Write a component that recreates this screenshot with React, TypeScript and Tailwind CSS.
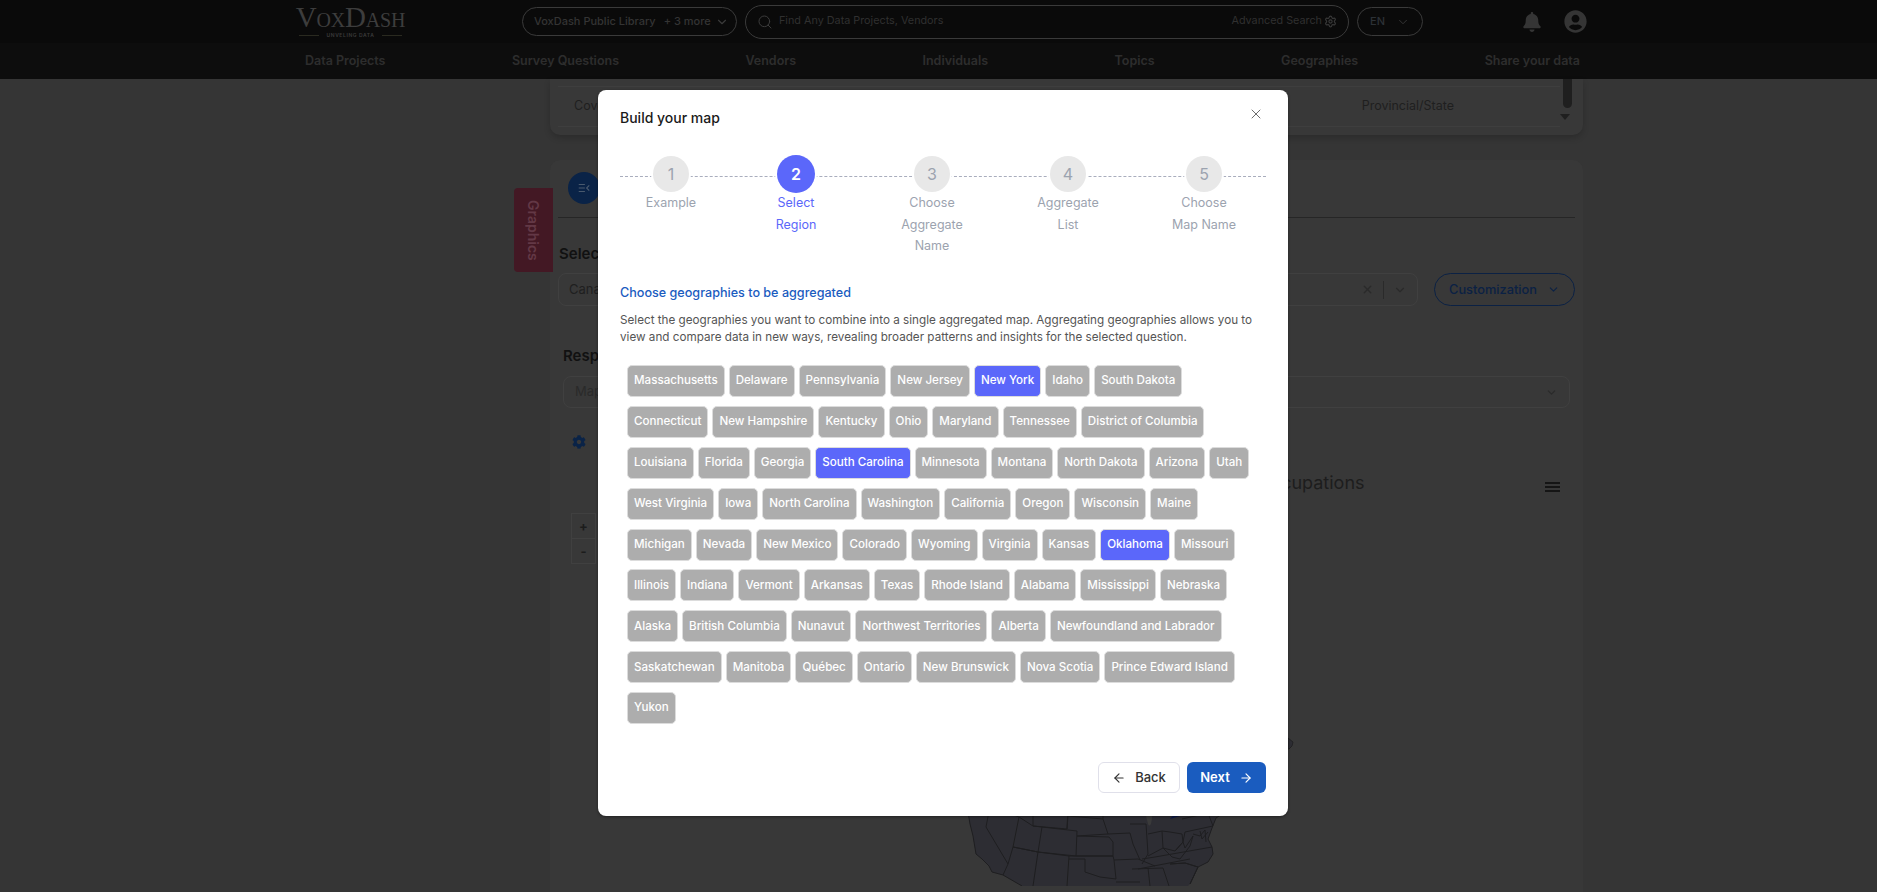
import React from "react";
import { ArrowLeft, ArrowRight, ChevronDown, Search, Settings, X } from "lucide-react";
import { FaBell, FaCog, FaUserCircle } from "react-icons/fa";

const rows = [
  ["Massachusetts", "Delaware", "Pennsylvania", "New Jersey", "New York", "Idaho", "South Dakota"],
  ["Connecticut", "New Hampshire", "Kentucky", "Ohio", "Maryland", "Tennessee", "District of Columbia"],
  ["Louisiana", "Florida", "Georgia", "South Carolina", "Minnesota", "Montana", "North Dakota", "Arizona", "Utah"],
  ["West Virginia", "Iowa", "North Carolina", "Washington", "California", "Oregon", "Wisconsin", "Maine"],
  ["Michigan", "Nevada", "New Mexico", "Colorado", "Wyoming", "Virginia", "Kansas", "Oklahoma", "Missouri"],
  ["Illinois", "Indiana", "Vermont", "Arkansas", "Texas", "Rhode Island", "Alabama", "Mississippi", "Nebraska"],
  ["Alaska", "British Columbia", "Nunavut", "Northwest Territories", "Alberta", "Newfoundland and Labrador"],
  ["Saskatchewan", "Manitoba", "Québec", "Ontario", "New Brunswick", "Nova Scotia", "Prince Edward Island"],
  ["Yukon"],
].flat();
const selected = new Set(["New York", "South Carolina", "Oklahoma"]);

const steps = [
  { n: 1, lines: ["Example"], col: "w-[102px]" },
  { n: 2, lines: ["Select", "Region"], col: "w-[148px]" },
  { n: 3, lines: ["Choose", "Aggregate", "Name"], col: "w-[124px]" },
  { n: 4, lines: ["Aggregate", "List"], col: "w-[148px]" },
  { n: 5, lines: ["Choose", "Map Name"], col: "w-[124px]" },
];

const nav = ["Data Projects", "Survey Questions", "Vendors", "Individuals", "Topics", "Geographies", "Share your data"];

function UsMap() {
  const land =
    "M17 2 L20 20 L23 32 L26 50 L32 55 L39 62 L42 68 L53 71 L72 82 L238 82 L240 80 L248 63 L258 58 L263 50 L262 43 L258 35 L262 24 L266 14 L277 7 L285 0 L17 0 Z";
  const lines = [
    "M40 2 L36 23 L58 60 L53 71",
    "M40 2 L69 13 L63 43 L58 60",
    "M69 13 L83 22 L92 23 L88 48 L63 43",
    "M83 2 L83 22 L117 25 L118 2",
    "M92 23 L127 27 L126 52 L88 48",
    "M63 43 L88 48 L83 82",
    "M88 48 L119 52 L117 82",
    "M117 25 L118 12 L153 15 L158 30 L127 32",
    "M153 2 L153 15 M154 10 L190 10",
    "M127 32 L159 33 L163 38 L163 52 L126 52",
    "M119 52 L163 52 L164 56 L166 75 L150 73 L135 68 L135 55 L119 55",
    "M158 30 L180 29 L183 40 L190 56",
    "M164 56 L188 55 L205 62 M166 78 L190 78",
    "M180 20 L196 20 L198 50 L192 60",
    "M198 30 L212 27 L213 44 L198 52",
    "M212 27 L220 28 L232 30 L233 38 L225 47 L213 44",
    "M232 15 L258 9 L263 22 L235 28 L233 38",
    "M225 47 L233 38 L235 44 L243 32 L240 42 L230 55 L222 53 L213 44",
    "M192 55 L205 53 L262 43",
    "M188 65 L240 55 M220 60 L235 59 L248 63",
    "M220 60 L235 59 L248 63 L240 80",
    "M182 65 L213 64 L219 82 M198 64 L200 82",
    "M250 27 L252 35 L258 28 M243 30 L250 32 L255 26 L256 38",
    "M258 9 L270 8 L277 7",
  ];
  return (
    <svg viewBox="0 -70 360 152" className="block h-[152px] w-[360px]" fill="none">
      <path d={land} fill="#2d2d33" />
      <path d="M220 15 L226 8 L235 6 L230 12 Z" fill="#0b1a4a" />
      <path d="M198 20 Q195 10 197 6 L201 6 Q203 12 201 20 Q199 23 198 20 Z" fill="#3a3a3a" />
      <path d="M17 2 L20 20 L23 32 L26 50 L32 55 L39 62 L42 68 L53 71 L72 82" stroke="#1e1e20" strokeWidth="1" />
      <path d="M277 7 L266 14 L262 24 L258 35 L262 43 L263 50 L258 58 L248 63 L240 80" stroke="#1e1e20" strokeWidth="1" />
      {lines.map((d) => (
        <path key={d} d={d} stroke="#1e1e20" strokeWidth="1" />
      ))}
      <path d="M338 -66 L343 -62 L342 -58 L339 -55 L338 -55 Z" fill="#2d2d33" stroke="#1e1e20" strokeWidth="0.8" />
    </svg>
  );
}

export default function App() {
  return (
    <div className="relative h-[892px] w-[1877px] overflow-hidden bg-[#353535] font-['Inter',sans-serif]">
      {/* Header */}
      <header className="flex h-[43px] items-center bg-[#0a0a0a] pl-[295px]">
        <div className="flex w-[111px] flex-col items-center">
          <span className="whitespace-nowrap font-['Liberation_Serif',serif] text-[29px] leading-[26px] tracking-[-0.2px] text-[#3d3d3d] [font-variant-caps:small-caps]">
            VoxDash
          </span>
          <div className="mt-[2px] flex items-center gap-[7px]">
            <span className="h-px w-[20px] bg-[#2a2a20]" />
            <span className="whitespace-nowrap text-[5px] font-semibold leading-[7px] tracking-[0.6px] text-[#3a3a3a]">UNVELING DATA</span>
            <span className="h-px w-[20px] bg-[#2a2a20]" />
          </div>
        </div>
        <div className="ml-[116px] flex h-[29px] w-[215px] items-center whitespace-nowrap rounded-full border border-[#3a3a3a] pl-[11px] pr-[7px] text-[11px] text-[#343434]">
          <span className="font-medium">VoxDash Public Library</span>
          <span className="ml-[8px] font-medium">+ 3 more</span>
          <ChevronDown className="ml-auto text-[#3a3a3a]" size={14} />
        </div>
        <div className="ml-[8px] flex h-[34px] w-[604px] items-center whitespace-nowrap rounded-full border border-[#3a3a3a] pl-[11px] pr-[11px] text-[10.8px] text-[#303030]">
          <Search className="text-[#3c3c3c]" size={16} strokeWidth={1.5} />
          <span className="ml-[6px]">Find Any Data Projects, Vendors</span>
          <span className="ml-auto">Advanced Search</span>
          <Settings className="ml-[2px] text-[#3a3a3a]" size={13} />
        </div>
        <div className="ml-[8px] flex h-[29px] w-[66px] items-center justify-between rounded-full border border-[#3a3a3a] pl-[12px] pr-[12px] text-[11px] font-medium text-[#2c3136]">
          <span>EN</span>
          <ChevronDown className="text-[#3a3a3a]" size={14} strokeWidth={1.5} />
        </div>
        <FaBell className="ml-[99px] text-[#353535]" size={20} />
        <FaUserCircle className="ml-[22px] text-[#353535]" size={23} />
      </header>

      {/* Nav */}
      <nav className="flex h-[36px] items-center justify-between bg-[#0d0d0d] pl-[305px] pr-[297px] text-[12.5px] font-semibold text-[#2d2d2d]">
        {nav.map((n) => (
          <span key={n}>{n}</span>
        ))}
      </nav>

      {/* Page behind the dialog */}
      <main className="ml-[550px] w-[1033px]">
        <section className="relative h-[56px] rounded-b-[10px] bg-[#383838] px-[8px] pt-[7px] shadow-[0_3px_6px_rgba(0,0,0,0.18)]">
          <div className="flex h-[41px] w-[1002px] items-center justify-between border-y border-[#3e3e3e] pl-[16px] pr-[106px] text-[12.5px] text-[#1f1f1f]">
            <span>Coverage</span>
            <span>Provincial/State</span>
          </div>
          <div className="absolute right-[11px] top-0 h-[29px] w-[9px] rounded-b-full bg-[#1f1f1f]" />
          <div className="absolute right-[13px] top-[35px] h-0 w-0 border-x-[5px] border-t-[6px] border-x-transparent border-t-[#1f1f1f]" />
        </section>

        <section className="relative mt-[25px] h-[760px] rounded-[10px] bg-[#383838] px-[8px]">
          <div className="absolute left-[-36px] top-[28px] flex h-[84px] w-[39px] items-center justify-center rounded-l-[4px] bg-[#431824]">
            <span className="text-[14px] font-semibold text-[#633846] [writing-mode:vertical-rl]">Graphics</span>
          </div>
          <div className="border-b border-[#262626] pb-[13px] pl-[10px] pt-[12px]">
            <div className="flex h-[32px] w-[32px] items-center justify-center rounded-full bg-[#0a2347]">
              <svg viewBox="0 0 16 16" className="h-[14px] w-[14px]" fill="none" stroke="#4a5a6e" strokeWidth="1.3">
                <path d="M2 4h7M2 8h7M2 12h7M14 5l-3 3 3 3" />
              </svg>
            </div>
          </div>
          <div className="ml-[1px] mt-[26px] text-[15px] font-semibold leading-[20px] text-[#111]">Select Question</div>
          <div className="mt-[9px] flex items-center">
            <div className="flex h-[33px] w-[860px] items-center rounded-[8px] border border-[#404040] pl-[10px] pr-[10px] text-[13px] text-[#1f1f1f]">
              <span>Canada</span>
              <X className="ml-auto text-[#2a2a2a]" size={13} strokeWidth={2.5} />
              <span className="mx-[9px] h-[18px] w-px bg-[#2a2a2a]" />
              <ChevronDown className="text-[#2a2a2a]" size={14} strokeWidth={2} />
            </div>
            <div className="ml-[16px] flex h-[33px] w-[141px] items-center justify-center gap-[10px] rounded-full border border-[#0b2144] text-[12.8px] font-medium text-[#0b2144]">
              <span>Customization</span>
              <ChevronDown size={13} strokeWidth={2} />
            </div>
          </div>
          <div className="ml-[5px] mt-[40px] text-[15px] font-semibold leading-[20px] text-[#111]">Response</div>
          <div className="ml-[5px] mt-[10px] flex h-[32px] w-[1007px] items-center rounded-[8px] border border-[#404040] pl-[11px] pr-[11px] text-[13px] text-[#2a2a2a]">
            <span>Map</span>
            <ChevronDown className="ml-auto text-[#2a2a2a]" size={13} />
          </div>
          <div className="ml-[14px] mt-[27px] text-[#0a2347]">
            <FaCog size={14} />
          </div>
          <div className="mt-[22px] flex items-center justify-between pl-[662px] pr-[15px]">
            <span className="text-[18px] leading-[24px] text-[#1d1d1d]">Top Occupations</span>
            <span className="mt-[8px] flex flex-col gap-[2px]">
              <span className="h-[2px] w-[15px] bg-[#151515]" />
              <span className="h-[2px] w-[15px] bg-[#151515]" />
              <span className="h-[2px] w-[15px] bg-[#151515]" />
            </span>
          </div>
          <div className="ml-[13px] mt-[18px] w-[25px] border border-[#404040] text-center text-[13px] font-bold leading-[24px] text-[#1c1c1c]">
            <div className="border-b border-[#404040]">+</div>
            <div>-</div>
          </div>
          <div className="ml-[392px] mt-[170px]">
            <UsMap />
          </div>
        </section>
      </main>

      {/* Dialog */}
      <div className="absolute left-[598px] top-[90px] h-[726px] w-[690px] rounded-[8px] bg-white px-[22px] pt-[18px] shadow-[0_1px_3px_rgba(0,0,0,0.4)]">
        <X className="absolute right-[24px] top-[16px] text-[#555]" size={16} strokeWidth={1.3} />
        <h2 className="text-[14px] font-medium leading-[20px] text-[#1a1a1a]">Build your map</h2>

        <div className="relative mt-[28px] flex">
          <div className="absolute left-0 right-0 top-[20px] border-t border-dashed border-[#a9adbd]" />
          {steps.map((s) => {
            const active = s.n === 2;
            return (
              <div key={s.n} className={`relative flex flex-col items-center ${s.col}`}>
                <div
                  className={
                    active
                      ? "-mt-px mb-[-1px] flex h-[38px] w-[38px] items-center justify-center rounded-full bg-[#5b67fa] text-[16px] font-semibold text-white ring-2 ring-white"
                      : "flex h-[36px] w-[36px] items-center justify-center rounded-full bg-[#e8e8e8] text-[16px] text-[#9ca3af] ring-2 ring-white"
                  }
                >
                  {s.n}
                </div>
                <div className={`text-center text-[12.5px] leading-[21.5px] ${active ? "text-[#5b67fa]" : "text-[#9ca3af]"}`}>
                  {s.lines.map((l) => (
                    <div key={l}>{l}</div>
                  ))}
                </div>
              </div>
            );
          })}
        </div>

        <h3 className="mt-[26px] text-[12.6px] font-medium leading-[20px] text-[#1a5cbf]">Choose geographies to be aggregated</h3>
        <p className="mt-[9px] text-[11.7px] leading-[17.5px] text-[#555]">
          Select the geographies you want to combine into a single aggregated map. Aggregating geographies allows you to view and compare data in new ways, revealing broader patterns and insights for the selected question.
        </p>

        <div className="ml-[7px] mt-[18.5px] flex w-[631px] flex-wrap gap-x-[4px] gap-y-[8.9px]">
          {rows.map((r) => (
            <span
              key={r}
              className={`flex h-[32px] items-center rounded-[5px] border border-[#dcdcdc] px-[6px] text-[11.6px] font-medium text-white ${
                selected.has(r) ? "bg-[#5b67fa]" : "bg-[#adadad]"
              }`}
            >
              {r}
            </span>
          ))}
        </div>

        <div className="mt-[38px] flex justify-end gap-[7px]">
          <button className="flex h-[31px] w-[82px] items-center justify-center gap-[9px] rounded-[6px] border border-[#e0e0ea] bg-white text-[13px] font-medium text-[#333]">
            <ArrowLeft size={14} />
            Back
          </button>
          <button className="flex h-[31px] w-[79px] items-center justify-center gap-[9px] rounded-[6px] bg-[#1a5cbf] text-[13px] font-semibold text-white">
            Next
            <ArrowRight size={14} />
          </button>
        </div>
      </div>
    </div>
  );
}
